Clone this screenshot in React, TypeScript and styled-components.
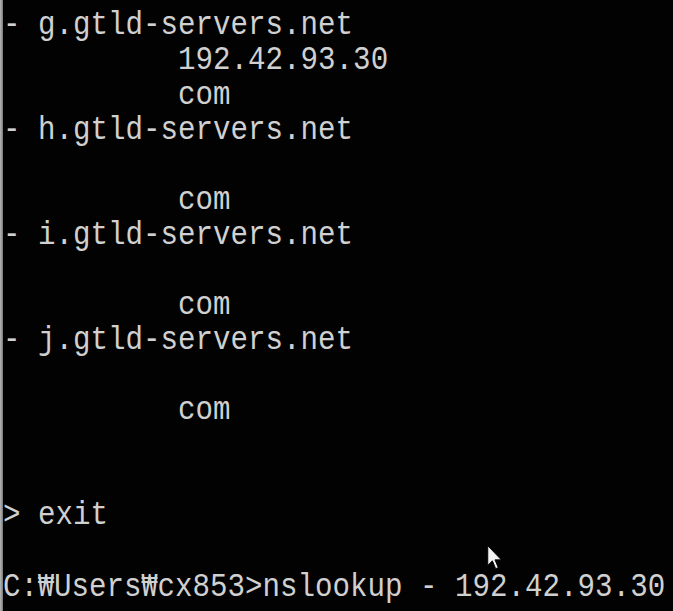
import React from "react";
import styled, { createGlobalStyle } from "styled-components";

const Global = createGlobalStyle`
  html, body { margin: 0; padding: 0; background: #000; }
  body { width: 673px; height: 611px; overflow: hidden; }
`;

const Screen = styled.div`
  position: relative;
  width: 673px;
  height: 611px;
  background: #020202;
  display: flex;
  overflow: hidden;
`;

const Edge = styled.div`
  width: 3px;
  flex: none;
  background: linear-gradient(90deg, #b8b8b8, #7a7a7a);
`;

const Console = styled.div`
  flex: 1;
  display: flex;
  flex-direction: column;
  padding-top: 8px;
  font-family: "Liberation Mono", monospace;
  font-size: 33px;
  line-height: 35px;
  color: #d0d0d0;
`;

const Line = styled.div`
  height: 35px;
  white-space: pre;
  transform: scaleX(0.884);
  transform-origin: 0 0;
`;

const Won = styled.span`
  display: inline-block;
  width: 1ch;
  text-align: center;
  font-family: "DejaVu Sans Mono", "Liberation Mono", monospace;
  font-size: 30px;
`;

const Pointer = styled.svg`
  position: absolute;
  left: 487px;
  top: 545px;
`;

const lines: string[] = [
  "- g.gtld-servers.net",
  "          192.42.93.30",
  "          com",
  "- h.gtld-servers.net",
  "",
  "          com",
  "- i.gtld-servers.net",
  "",
  "          com",
  "- j.gtld-servers.net",
  "",
  "          com",
  "",
  "",
  "> exit",
  "",
  "C:₩Users₩cx853>nslookup - 192.42.93.30",
];

function renderLine(text: string) {
  const parts = text.split("₩");
  return parts.map((p, i) => (
    <React.Fragment key={i}>
      {p}
      {i < parts.length - 1 && <Won>₩</Won>}
    </React.Fragment>
  ));
}

export default function App() {
  return (
    <>
      <Global />
      <Screen>
        <Edge />
        <Console>
          {lines.map((l, i) => (
            <Line key={i}>{renderLine(l)}</Line>
          ))}
        </Console>
        <Pointer width="16" height="25" viewBox="0 0 12 19">
          <path
            d="M0.5 0.5 L0.5 15.5 L4 12 L6.5 18 L8.5 17.2 L6 11.3 L10.8 11.3 Z"
            fill="#f4f4f4"
            stroke="#000000"
            strokeWidth="0.7"
            strokeLinejoin="round"
          />
        </Pointer>
      </Screen>
    </>
  );
}
